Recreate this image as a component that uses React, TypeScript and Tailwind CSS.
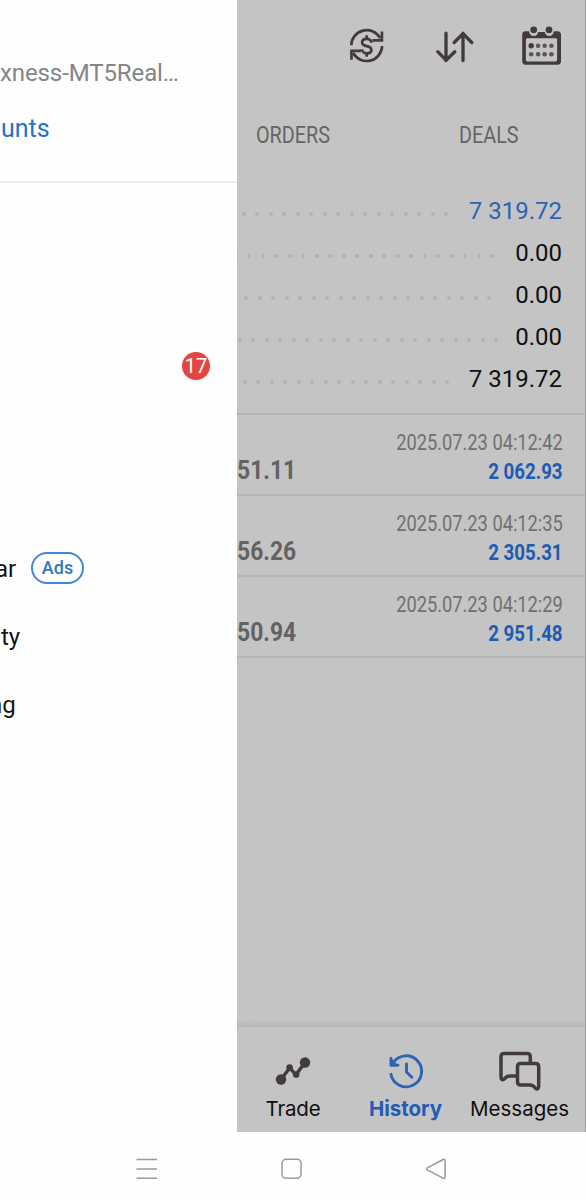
import React from "react";

const summary = [
  { value: "7 319.72", dots: "w-[211px]", tone: "text-[#2c63b4]" },
  { value: "0.00", dots: "w-[257px]", tone: "text-[#101010]" },
  { value: "0.00", dots: "w-[254px]", tone: "text-[#101010]" },
  { value: "0.00", dots: "w-[261px]", tone: "text-[#101010]" },
  { value: "7 319.72", dots: "w-[212px]", tone: "text-[#101010]" },
];

const deals = [
  { price: "51.11", time: "2025.07.23 04:12:42", profit: "2 062.93" },
  { price: "56.26", time: "2025.07.23 04:12:35", profit: "2 305.31" },
  { price: "50.94", time: "2025.07.23 04:12:29", profit: "2 951.48" },
];

function Dots({ width }: { width: string }) {
  return (
    <div className={`flex h-1 shrink-0 translate-y-1 justify-end gap-[9.5px] overflow-hidden ${width}`}>
      {Array.from({ length: 20 }, (_, i) => (
        <span key={i} className="h-1 w-1 shrink-0 rounded-full bg-[#b2b2b2]" />
      ))}
    </div>
  );
}

function CurrencyIcon() {
  return (
    <svg width="40" height="40" viewBox="0 0 40 40" fill="none" stroke="#433b3b" strokeWidth="2.700">
      <path d="M4.300 19.200A15.400 15.400 0 0 1 33.200 12.200" />
      <path d="M25.300 14.300h9.600V5.500" />
      <path d="M35.100 20A15.400 15.400 0 0 1 6.200 27" />
      <path d="M14 24.800H4.500v9" />
      <path d="M19.700 9.200v3.600M19.700 27v3.700" />
      <path d="M24.300 16.800c0-2.300-1.800-4-4.600-4s-4.600 1.500-4.600 3.700c0 2.400 1.900 3 4.600 3.600 2.800.6 4.700 1.300 4.700 3.600 0 2.100-1.900 3.600-4.700 3.600S15 25.600 15 23.300" />
    </svg>
  );
}

function SortIcon() {
  return (
    <svg width="40" height="40" viewBox="0 0 40 40" fill="none" stroke="#433b3b" strokeWidth="3.300" strokeLinecap="round" strokeLinejoin="round">
      <path d="M11 7.200v27.500M2.700 25.700l8.300 8.500 8.800-8.500" />
      <path d="M28 34.500V7.200M19.200 16.500l8.800-8.900 8.800 8.900" />
    </svg>
  );
}

function CalendarIcon() {
  return (
    <svg width="40" height="42" viewBox="0 0 40 42">
      <path
        fill="#433b3b"
        fillRule="evenodd"
        d="M4.200 6.300h3.900c.3 3 2.200 4.700 4.600 4.700 2.300 0 4-1.500 4.500-4h6.600c.5 2.500 2.200 4 4.500 4 2.400 0 4.200-1.700 4.500-4.700h4c1.900 0 3.200 1.300 3.200 3.200v27c0 2-1.300 3.200-3.300 3.200H4.500c-2 0-3.300-1.200-3.300-3.200v-27c0-1.900 1.100-3.200 3-3.200ZM6.500 13.200c-1 0-1.600.6-1.600 1.600v19.600c0 1.300.8 2.100 2.100 2.100h27c1.300 0 2.100-.8 2.100-2.100V14.800c0-1-.6-1.600-1.600-1.600Z"
      />
      <circle cx="12.700" cy="4.800" r="3.400" fill="#433b3b" />
      <circle cx="28" cy="4.800" r="3.400" fill="#433b3b" />
      <g fill="#5d5656">
        <circle cx="10.200" cy="20.800" r="2.700" fill="#433b3b" />
        <circle cx="17.100" cy="20.800" r="2.300" />
        <circle cx="23.700" cy="20.800" r="2.300" />
        <circle cx="30.400" cy="20.800" r="2.300" />
        <circle cx="10.200" cy="29.300" r="2.300" />
        <circle cx="17.100" cy="29.300" r="2.300" />
        <circle cx="23.700" cy="29.300" r="2.300" />
        <circle cx="30.400" cy="29.300" r="2.300" />
      </g>
    </svg>
  );
}

function TradeIcon() {
  return (
    <svg width="40" height="40" viewBox="0 0 40 40" fill="none">
      <path d="M8 28.500 16.600 17l6.400 6.600L32 11.500" stroke="#433b3b" strokeWidth="3.400" />
      <g fill="#433b3b">
        <circle cx="8" cy="28.500" r="5.200" />
        <circle cx="32" cy="11.500" r="5.200" />
        <circle cx="16.600" cy="16.600" r="3.300" />
        <circle cx="23.200" cy="23.600" r="3.300" />
      </g>
    </svg>
  );
}

function HistoryIcon() {
  return (
    <svg width="40" height="40" viewBox="0 0 40 40" fill="none" stroke="#2c63b8" strokeWidth="2.900" strokeLinecap="round" strokeLinejoin="round">
      <path d="M4.900 23.300A15.500 15.500 0 1 0 7.300 11.600" />
      <path d="M5 7.500v6.700h7" />
      <path d="M5.200 8.500v5.700h5.700Z" fill="#2c63b8" strokeWidth="1.500" />
      <path d="M20.500 13v8l5.300 5.300" />
    </svg>
  );
}

function MessagesIcon() {
  return (
    <svg width="44" height="40" viewBox="0 0 44 40" fill="none" stroke="#433b3b" strokeWidth="3.500" strokeLinejoin="round">
      <path d="M32.300 12.500V5.700c0-2-1.200-3.200-3.200-3.200H6.200C4.200 2.500 3 3.700 3 5.700V26c0 3 2 3.600 3.600 1.700 1.500-2 2.900-2.700 5.200-2.700h7.400" />
      <path d="M22.700 12.500h14.800c2 0 3.200 1.200 3.200 3.200v19.600c0 3-2.200 3.600-3.500 1.600-1.500-2.300-2.700-3-5.300-3h-9.200c-2 0-3.200-1.200-3.200-3.200v-15c0-2 1.200-3.200 3.200-3.200Z" />
    </svg>
  );
}

function Drawer() {
  return (
    <aside className="flex h-[1132px] w-[237px] shrink-0 flex-col overflow-hidden bg-[#fefefe] text-[#151515]">
      <div className="flex h-[183px] flex-col border-b-2 border-[#ebebeb] pt-[53px]">
        <div className="h-10 whitespace-nowrap text-[24px] leading-10 tracking-[-0.100px] text-[#858585]">xness-MT5Real…</div>
        <div className="mt-[16px] h-10 whitespace-nowrap pl-px text-[25px] leading-10 text-[#2374c8]">unts</div>
      </div>
      <div className="mt-[149px] flex h-[68px] items-center justify-end pr-[27px]">
        <span className="flex h-7 w-7 items-center justify-center rounded-full bg-[#e34543] text-[20px] leading-none text-white">17</span>
      </div>
      <div className="mt-[135px] flex h-[68px] items-center">
        <span className="-ml-[5px] w-[21px] text-[24px]">ar</span>
        <span className="ml-[15px] flex h-8 w-[53px] -translate-y-px items-center justify-center rounded-full border-2 border-[#4088d3] text-[18px] font-medium leading-none text-[#3177c4]">Ads</span>
      </div>
      <div className="flex h-[68px] items-center pl-px text-[24px]">ty</div>
      <div className="flex h-[68px] items-center text-[24px]"><span className="-ml-[11px]">ng</span></div>
    </aside>
  );
}

function HistoryScreen() {
  return (
    <main className="flex h-[1132px] w-[349px] flex-col border-r border-[#999999] bg-[#c4c4c4]">
      <header className="flex h-[92px] items-center pl-[110px]">
        <CurrencyIcon />
        <div className="ml-[48px]"><SortIcon /></div>
        <div className="ml-[46px]"><CalendarIcon /></div>
      </header>
      <div className="flex h-[97px] pl-[19px] pt-[24px] text-[23px] leading-10 text-[#646464]">
        <span className="w-[203px] origin-left scale-x-[0.860]">ORDERS</span>
        <span className="origin-left scale-x-[0.860]">DEALS</span>
      </div>
      <section className="h-[226px] border-b-2 border-[#b5b5b5]">
        {summary.map((row, i) => (
          <div key={i} className="flex h-[42px] items-center pr-[23px]">
            <Dots width={row.dots} />
            <span className={`ml-auto translate-y-px whitespace-nowrap text-[24px] leading-[42px] ${row.tone}`}>{row.value}</span>
          </div>
        ))}
      </section>
      {deals.map((deal) => (
        <div key={deal.price} className="flex h-[81px] shrink-0 items-end justify-between border-b-2 border-[#b5b5b5] pb-[8px] pr-[22px]">
          <span className="origin-left scale-x-[0.880] pb-px text-[26px] font-bold leading-[30px] text-[#626262]">{deal.price}</span>
          <div className="flex flex-col items-end whitespace-nowrap text-[22px] leading-[29px]">
            <span className="origin-right scale-x-[0.830] text-[#707070]">{deal.time}</span>
            <span className="origin-right scale-x-[0.850] font-bold text-[#1d5cb2]">{deal.profit}</span>
          </div>
        </div>
      ))}
      <div className="flex-1 bg-linear-to-t from-[#b6b6b6] to-[#c4c4c4] to-[8px]" />
      <nav className="flex h-[105px] shrink-0 font-['Inter',sans-serif] text-[20.500px] leading-6 text-[#101010]">
        <div className="flex w-[112px] flex-col items-center pt-[24px]">
          <TradeIcon />
          <span className="mt-[6px] tracking-[-0.200px]">Trade</span>
        </div>
        <div className="flex w-[113px] flex-col items-center pt-[24px]">
          <HistoryIcon />
          <span className="mt-[6px] font-bold text-[#205cb5]">History</span>
        </div>
        <div className="flex w-[115px] flex-col items-center pt-[24px]">
          <MessagesIcon />
          <span className="mt-[6px]">Messages</span>
        </div>
      </nav>
    </main>
  );
}

export default function App() {
  return (
    <div className="flex h-[1200px] w-[586px] flex-col overflow-hidden bg-[#fefefe] font-['Roboto',sans-serif]">
      <div className="flex">
        <Drawer />
        <HistoryScreen />
      </div>
      <footer className="flex h-[68px] items-center pl-[134px] pt-[6px]">
        <svg width="26" height="26" viewBox="0 0 26 26" stroke="#999" strokeWidth="1.600">
          <path d="M2.500 3.500h20.500M2.500 13h20.500M2.500 22.300h20.500" />
        </svg>
        <svg className="ml-[118px]" width="26" height="26" viewBox="0 0 26 26" fill="none" stroke="#999" strokeWidth="1.500">
          <rect x="4" y="3.300" width="19" height="19" rx="4" />
        </svg>
        <svg className="ml-[119px]" width="26" height="26" viewBox="0 0 26 26" fill="none" stroke="#999" strokeWidth="1.500" strokeLinejoin="round">
          <path d="M4.300 11.800 20.200 3.500c1-.5 1.900 0 1.900 1.100v16.500c0 1.100-.9 1.600-1.900 1.100L4.300 13.900c-1-.5-1-1.600 0-2.100Z" />
        </svg>
      </footer>
    </div>
  );
}
